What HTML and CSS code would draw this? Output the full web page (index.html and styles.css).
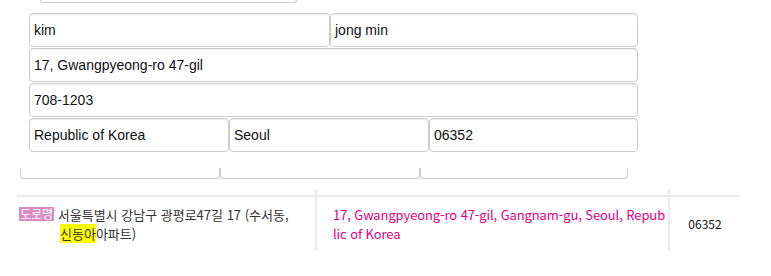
FILE: index.html
```html
<!DOCTYPE html>
<html lang="ko">
<head>
<meta charset="utf-8">
<link rel="stylesheet" href="styles.css">
</head>
<body>
<div class="top-stub"></div>
<div class="form">
  <div class="row">
    <div class="field w300">kim</div>
    <div class="field w308">jong min</div>
  </div>
  <div class="row">
    <div class="field wfull">17, Gwangpyeong-ro 47-gil</div>
  </div>
  <div class="row">
    <div class="field wfull">708-1203</div>
  </div>
  <div class="row">
    <div class="field w200">Republic of Korea</div>
    <div class="field w200">Seoul</div>
    <div class="field w209">06352</div>
  </div>
</div>
<div class="stub-row">
  <div class="stub s200"></div>
  <div class="stub s200"></div>
  <div class="stub s208"></div>
</div>
<div class="result">
  <div class="head">
    <div class="hc c1"></div>
    <div class="hc c2"></div>
    <div class="hc c3"></div>
  </div>
  <div class="body">
    <div class="cell c1 kor"><span class="badge">도로명</span> 서울특별시 강남구 광평로47길 17 (수서동,<br><span class="hl">신동아</span>아파트)</div>
    <div class="cell c2 eng">17, Gwangpyeong-ro 47-gil, Gangnam-gu, Seoul, Repub<br>lic of Korea</div>
    <div class="cell c3 zip">06352</div>
  </div>
</div>
</body>
</html>
```
FILE: styles.css
```css
html, body { margin: 0; padding: 0; background: #fff; }
body { width: 771px; height: 276px; overflow: hidden; font-family: "Liberation Sans", Arial, sans-serif; }

.top-stub {
  margin-left: 40px;
  width: 255px;
  height: 2px;
  border: 1px solid #ccc;
  border-top: none;
  border-radius: 0 0 4px 4px;
}

.form { margin: 10px 0 0 29px; width: 609px; }
.row { display: flex; margin-bottom: 1px; }
.field {
  box-sizing: border-box;
  height: 34px;
  border: 1px solid #ccc;
  border-radius: 4px;
  box-shadow: inset 0 1px 1px rgba(0,0,0,.075);
  padding: 0 4px;
  font-size: 14px;
  line-height: 32px;
  color: #111;
  background: #fff;
}
.w300 { width: 301px; }
.w308 { width: 308px; }
.wfull { width: 609px; }
.w200 { width: 200px; }
.w209 { width: 209px; }

.stub-row { display: flex; margin: 16px 0 0 20px; }
.stub {
  box-sizing: border-box;
  height: 11px;
  border: 1px solid #ccc;
  border-top: none;
  border-radius: 0 0 4px 4px;
}
.s200 { width: 200px; }
.s208 { width: 208px; }

.result { margin: 10px 0 0 17px; width: 723px; font-family: "Noto Sans CJK KR", "Noto Sans", sans-serif; font-size: 13px; }
.head, .body { display: flex; }
.head { height: 6px; border-bottom: 2px solid #ebebeb; }
.hc, .cell { box-sizing: border-box; }
.c1 { width: 300px; border-right: 2px solid #ebebeb; }
.c2 { width: 353px; border-right: 2px solid #ebebeb; }
.c3 { width: 70px; }
.body { height: 54px; }
.cell { padding-top: 8px; line-height: 19px; }
.kor { padding-left: 2px; color: #333; }
.badge {
  display: inline-block;
  background: #d98bc2;
  color: #fff;
  font-size: 12px;
  line-height: 14px;
  padding: 0 1px;
  vertical-align: 1px;
}
.hl { background: #ffff00; margin-left: 41px; }
.eng { padding-left: 16px; color: #e4007f; white-space: nowrap; letter-spacing: -0.1px; }
.zip { color: #111; text-align: center; padding-top: 17px; font-size: 12px; }
```
